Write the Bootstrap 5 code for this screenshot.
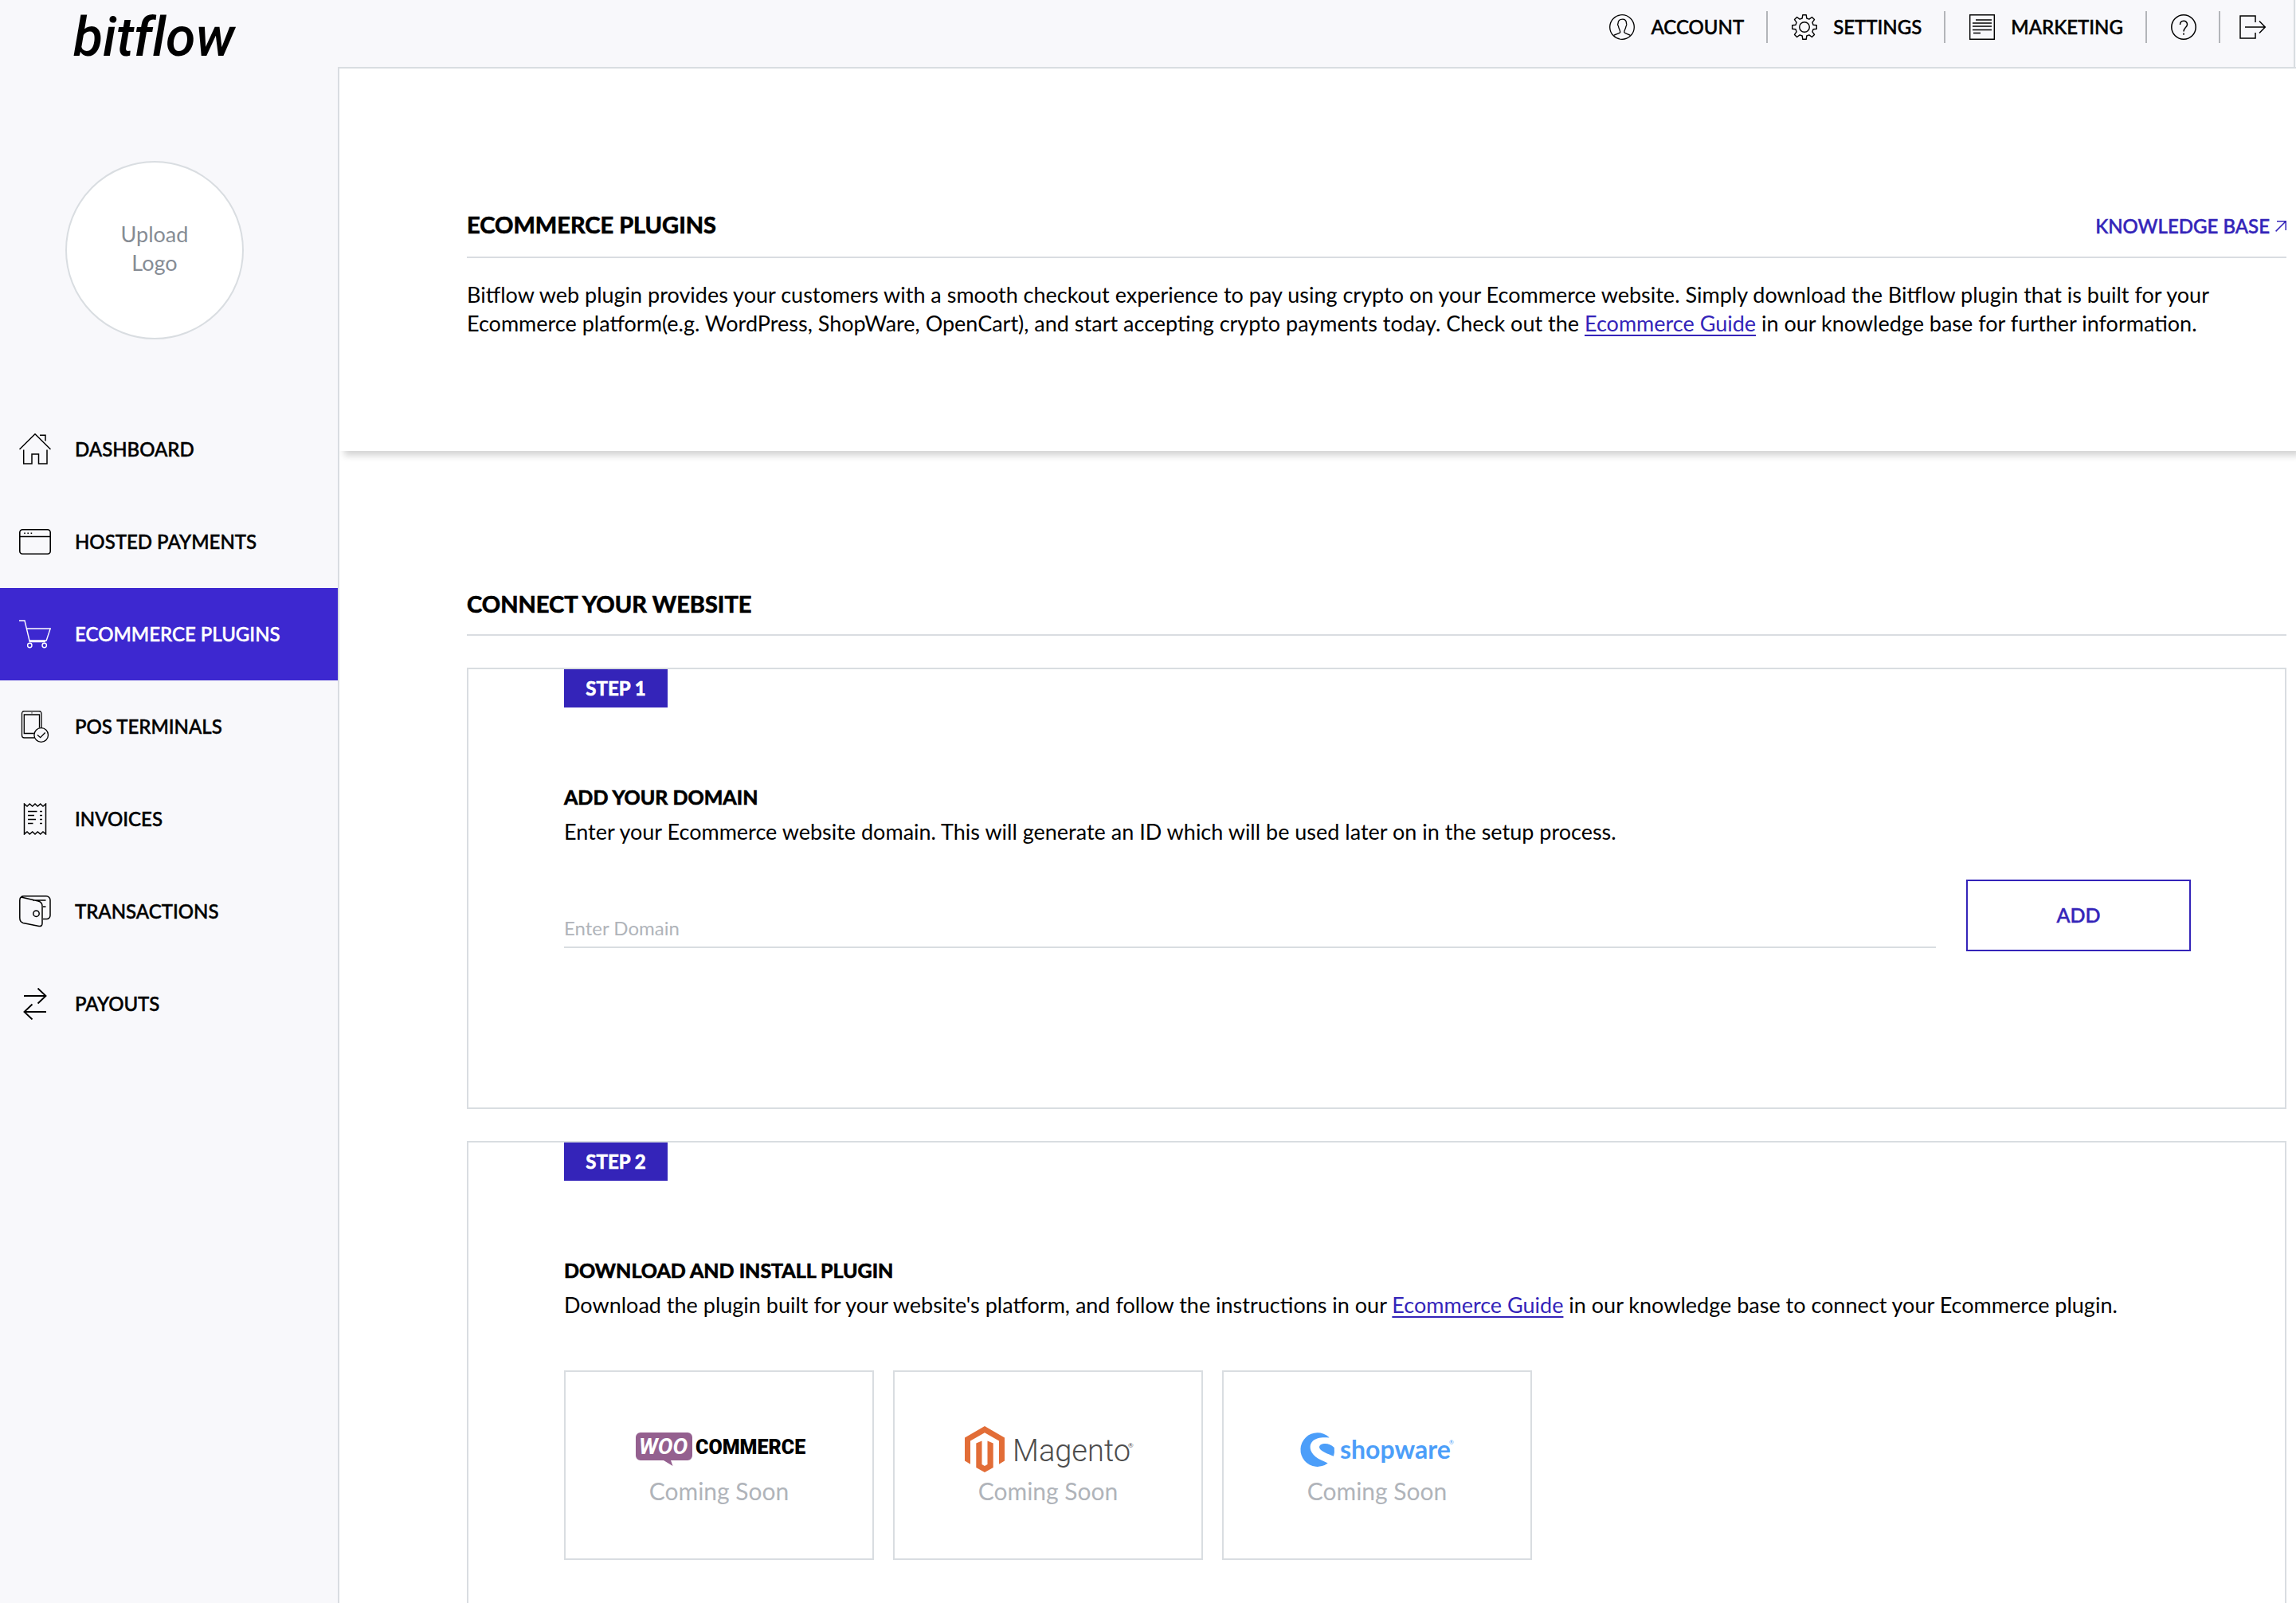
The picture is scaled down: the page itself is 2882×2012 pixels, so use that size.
<!DOCTYPE html>
<html lang="en">
<head>
<meta charset="utf-8">
<meta name="viewport" content="width=device-width, initial-scale=1">
<title>Bitflow – Ecommerce Plugins</title>
<link href="https://cdn.jsdelivr.net/npm/bootstrap@5.3.0/dist/css/bootstrap.min.css" rel="stylesheet">
<style>
  :root { --line: #d9dde1; --brand: #3424b9; --brand-active: #3d28d0; --shell: #f8f8fb; --mute: #b0b4ba; }
  body { font-family: Lato, "Open Sans", sans-serif; font-size: 27px; line-height: 36px; color: #000; background: var(--shell); }
  svg { display: block; flex: none; fill: none; stroke: currentColor; }
  a { color: inherit; }
  .topbar { height: 84px; border-right: 2px solid var(--line); margin-right: 1px; padding: 14px 34px 0 92px; }
  .wordmark { font-family: Roboto, Inter, sans-serif; font-size: 68px; font-weight: 500; font-style: italic; line-height: 66px; color: #000; font-variant-ligatures: none; }
  .topnav a { gap: 20px; }
  .topnav a, .side .nav-link, .kb { font-size: 24px; font-weight: 500; -webkit-text-stroke: .5px currentColor; }
  .topnav li { display: flex; align-items: center; height: 40px; padding: 0 28px 0 30px; border-left: 2px solid #b3b5b9; }
  .topnav li:first-child { border-left: 0; }
  .topnav li:last-child { padding: 0 0 0 24px; }
  .side { width: 424px; flex: none; padding-top: 118px; }
  .upload { width: 224px; height: 224px; margin: 0 0 80px 82px; border: 2px solid var(--line); background: #fff; color: #868c94; line-height: 36px; }
  .side .nav-link { height: 116px; padding: 0 24px; gap: 30px; color: #000; border-radius: 0; }
  .side .nav-link.active { background: var(--brand-active); color: #fff; }
  .board { border-left: 2px solid var(--line); border-top: 2px solid var(--line); min-width: 0; }
  .intro { padding: 178px 12px 142px 160px; box-shadow: 6px 6px 8px rgba(0,0,0,.17); }
  .intro p { margin: 28px 0 0; }
  .connect { padding: 174px 12px 0 160px; }
  .titlebar { border-bottom: 2px solid var(--line); padding-bottom: 18px; }
  .titlebar h1, .titlebar h2 { font-size: 29px; line-height: 36px; margin: 0 0 2px; }
  .titlebar h1, .titlebar h2, .step h3, .tag { font-weight: 700; -webkit-text-stroke: .7px currentColor; }
  .kb { line-height: 40px; color: var(--brand); gap: 7px; }
  .guide { color: var(--brand); text-decoration: underline; text-decoration-thickness: 2px; text-underline-offset: 4px; }
  .step { border: 2px solid var(--line); margin-top: 40px; padding: 0 118px 196px 120px; }
  .tag { display: flex; align-items: center; justify-content: center; width: 130px; height: 48px; margin-bottom: 94px; background: var(--brand); color: #fff; font-size: 24px; }
  .step h3 { font-size: 25px; line-height: 36px; margin: 0 0 8px; }
  .addrow { gap: 38px; margin-top: 42px; }
  .domain { height: 50px; padding: 0; margin-bottom: 4px; border: 0; border-bottom: 2px solid var(--line); border-radius: 0; font-size: 24px; background: #fff; }
  .domain::placeholder { color: var(--mute); opacity: 1; }
  .addbtn { width: 282px; height: 90px; border: 2px solid var(--brand); border-radius: 0; color: var(--brand); font-size: 25px; font-weight: 500; -webkit-text-stroke: .5px currentColor; }
  .plugins { gap: 24px; margin-top: 64px; }
  .plugin { width: 389px; height: 238px; border: 2px solid var(--line); color: var(--mute); font-size: 30px; padding-top: 64px; }
  .plugin svg { overflow: visible; stroke: none; }
  .plugin .logotype { font-family: Roboto, "Liberation Sans", sans-serif; }
</style>
</head>
<body>
<div class="vh-100 overflow-hidden d-flex flex-column">
  <header class="topbar d-flex align-items-start justify-content-between flex-shrink-0">
    <a href="#" class="wordmark text-decoration-none">bitflow</a>
    <ul class="topnav list-unstyled d-flex align-items-center m-0">
      <li><a href="#" class="d-flex align-items-center text-decoration-none">
        <svg width="32" height="32" viewBox="0 0 32 32" stroke-width="1.3"><circle cx="16" cy="16" r="15.3"/><path d="M5.500 26.500C8 24.500 13 24.500 13.700 22.500 13.900 20 12 18.500 11.500 15 11 14.500 10.200 12.500 11 11.500 11 8 13 6.200 16.500 6.200S21.500 8 21.500 11.500C22 12.500 21.500 14.500 21 15 20.500 18.500 18.600 20 18.800 22.500 19.500 24.500 24 24.500 26.500 26.500"/></svg>ACCOUNT</a></li>
      <li><a href="#" class="d-flex align-items-center text-decoration-none">
        <svg width="32" height="32" viewBox="-16 -16 32 32" stroke-width="1.4" stroke-linejoin="round"><path d="M-2.800-11-2.200-15.300H2.200L2.800-11 5.900-9.900 9.400-12.500 12.500-9.400 9.900-5.900 11-2.800 15.300-2.200V2.200L11 2.800 9.900 5.900 12.500 9.400 9.400 12.500 5.900 9.900 2.800 11 2.200 15.300H-2.200L-2.800 11-5.900 9.900-9.400 12.500-12.500 9.400-9.900 5.900-11 2.800-15.300 2.200V-2.200L-11-2.800-9.900-5.900-12.500-9.400-9.400-12.500-5.900-9.900Z"/><circle r="6.300"/></svg>SETTINGS</a></li>
      <li><a href="#" class="d-flex align-items-center text-decoration-none">
        <svg width="32" height="32" viewBox="0 0 32 32" stroke-width="1.4"><path d="M.7.7H31.300V31.300H.7ZM8 7H28M4 11H28M4 15H28M4 19.500H28M5 23.500H14"/></svg>MARKETING</a></li>
      <li><a href="#" aria-label="Help">
        <svg width="32" height="32" viewBox="0 0 32 32" stroke-width="1.5"><circle cx="16" cy="16" r="15.200"/><path d="M11.500 13C11.500 6.800 20.500 6.800 20.500 12.500 20.500 16.500 16 16.500 16 21.500M16 23.500V25.800"/></svg></a></li>
      <li><a href="#" aria-label="Log out">
        <svg width="34" height="32" viewBox="0 0 34 32" stroke-width="1.500"><path d="M20 10V2H1V30H20V23M7 16H32M25 8.500 32.300 16 25 23.500"/></svg></a></li>
    </ul>
  </header>

  <div class="d-flex flex-grow-1">
    <aside class="side">
      <button type="button" class="upload rounded-circle d-flex align-items-center justify-content-center p-0 pb-1">Upload<br>Logo</button>
      <nav class="nav flex-column">
        <a href="#" class="nav-link d-flex align-items-center"><svg width="40" height="40" viewBox="0 0 40 40" stroke-width="1.500"><path d="M.5 20 20 .8 39.500 20M26 2.200H33V9.500M5.700 20.500V38H16V26H24.500V38H35V20.500"/></svg>DASHBOARD</a>
        <a href="#" class="nav-link d-flex align-items-center"><svg width="40" height="40" viewBox="0 0 40 40" stroke-width="1.600"><rect x=".8" y="4.800" width="38.400" height="30.400" rx="3.500"/><path d="M1 13.500H39M6.200 9.300h1.600M10.400 9.300h1.600M14.600 9.300h1.600"/></svg>HOSTED PAYMENTS</a>
        <a href="#" class="nav-link active d-flex align-items-center" aria-current="page"><svg width="40" height="40" viewBox="0 0 40 40" stroke-width="1.400"><path d="M0 3H7L13.300 29.500H33M8.700 13H39.200L34.200 28H13"/><circle cx="13.300" cy="34" r="2.700"/><circle cx="31.700" cy="34" r="2.700"/></svg>ECOMMERCE PLUGINS</a>
        <a href="#" class="nav-link d-flex align-items-center"><svg width="40" height="40" viewBox="0 0 40 40" stroke-width="1.300"><path d="M19.500 34H6.500a3 3 0 0 1-3-3V3.500a3 3 0 0 1 3-3H25a3 3 0 0 1 3 3V21.500M18.700 28.500H6.300V5H25.500V21.500M15.500 2.800h1"/><circle cx="27.700" cy="30.500" r="8.800"/><path d="M23 30.500 26.700 33.700 32.700 27.500"/></svg>POS TERMINALS</a>
        <a href="#" class="nav-link d-flex align-items-center"><svg width="40" height="40" viewBox="0 0 40 40" stroke-width="1.500"><path d="M6.500 39V1L10 4 13.300 1 16.700 4 20 1 23.300 4 26.700 1 30 4 33.500 1V39L30 36 26.700 39 23.300 36 20 39 16.700 36 13.300 39 10 36ZM11 10.500H22.500M11 15.500H19M11 20.500H21M11 25.500H17.500M26 10.500h3M26 15.500h3M26 20.500h3M26 25.500h3"/></svg>INVOICES</a>
        <a href="#" class="nav-link d-flex align-items-center"><svg width="40" height="40" viewBox="0 0 40 40" stroke-width="1.500"><path d="M2.500 2Q3.500.8 6 .8H34a5 5 0 0 1 5 5V25a4.500 4.500 0 0 1-4.500 4.500H30M17 6H33.500M30 14H33.500M2.500 2 24 7Q29 8.500 29 13V35Q29 39 25 38.500L5 34.500Q.8 33 .8 28V6Q.8 3 2.500 2Z"/><circle cx="21.500" cy="22.700" r="3.700"/></svg>TRANSACTIONS</a>
        <a href="#" class="nav-link d-flex align-items-center"><svg width="40" height="40" viewBox="0 0 40 40" stroke-width="1.900"><path d="M6 10H33.500M23.500.5 33.500 10 23.500 19.500M34 30H7M16.500 20.500 6.500 30 16.500 39.500"/></svg>PAYOUTS</a>
      </nav>
    </aside>

    <main class="board flex-grow-1 bg-white overflow-hidden">
      <section class="intro">
        <div class="titlebar d-flex align-items-start justify-content-between">
          <h1>ECOMMERCE PLUGINS</h1>
          <a href="#" class="kb d-flex align-items-center text-decoration-none">KNOWLEDGE BASE<svg width="14" height="14" viewBox="0 0 14 14" stroke-width="1.500"><path d="M2 .8H13.200V12M13.200.8.6 13.400"/></svg></a>
        </div>
        <p>Bitflow web plugin provides your customers with a smooth checkout experience to pay using crypto on your Ecommerce website. Simply download the Bitflow plugin that is built for your Ecommerce platform(e.g. WordPress, ShopWare, OpenCart), and start accepting crypto payments today. Check out the <a href="#" class="guide">Ecommerce Guide</a> in our knowledge base for further information.</p>
      </section>

      <section class="connect">
        <div class="titlebar"><h2>CONNECT YOUR WEBSITE</h2></div>

        <div class="step">
          <span class="tag">STEP 1</span>
          <h3><label for="domain">ADD YOUR DOMAIN</label></h3>
          <p class="mb-0">Enter your Ecommerce website domain. This will generate an ID which will be used later on in the setup process.</p>
          <form class="addrow d-flex align-items-end">
            <input id="domain" type="text" class="domain form-control" placeholder="Enter Domain">
            <button type="button" class="addbtn btn flex-shrink-0">ADD</button>
          </form>
        </div>

        <div class="step">
          <span class="tag">STEP 2</span>
          <h3>DOWNLOAD AND INSTALL PLUGIN</h3>
          <p class="mb-0">Download the plugin built for your website's platform, and follow the instructions in our <a href="#" class="guide">Ecommerce Guide</a> in our knowledge base to connect your Ecommerce plugin.</p>
          <div class="plugins d-flex">
            <div class="plugin d-flex flex-column align-items-center">
              <svg width="210" height="67" viewBox="0 0 210 67" role="img" aria-label="WooCommerce">
                <path fill="#94608f" d="M6 12H65a6 6 0 0 1 6 6V41a6 6 0 0 1-6 6H44L46.500 54 35 47H6a6 6 0 0 1-6-6V18a6 6 0 0 1 6-6Z"/>
                <text class="logotype" x="4" y="39" font-size="28" font-weight="700" font-style="italic" fill="#fff">WOO</text>
                <text class="logotype" x="75" y="39" font-size="25" font-weight="900" fill="#000">COMMERCE</text>
              </svg>
              <span>Coming Soon</span>
            </div>
            <div class="plugin d-flex flex-column align-items-center">
              <svg width="210" height="67" viewBox="0 0 210 67" role="img" aria-label="Magento">
                <path fill="#e26d37" d="M25 4 50 18.500V47.500L43 51.700V22.600L25 12.300 7 22.600V51.700L0 47.500V18.500ZM14.300 25.500 21.500 22.500V52L25 54 28.500 52V22.500L35.700 25.500V56L25 62 14.300 56Z"/>
                <text class="logotype" x="60" y="48" font-size="38" font-weight="300" fill="#4d4d4d">Magento</text>
                <text x="205" y="31" font-size="8" fill="#4d4d4d">®</text>
              </svg>
              <span>Coming Soon</span>
            </div>
            <div class="plugin d-flex flex-column align-items-center">
              <svg width="190" height="67" viewBox="0 0 190 67" role="img" aria-label="Shopware">
                <g fill="#4c9ef9"><path d="M34.300 18A21.300 21.300 0 1 0 32.700 50.500C27 47.500 22 46 17.700 42.700 9 36 9 27 14 22.500 18 18.500 26 17.500 34.300 18.500ZM40.800 31C37 27 32 25.500 28 26 23.500 26.500 21 29 22.500 32 24.500 36 33 39 40 41.700Q41.500 37 40.800 31Z"/>
                <text x="48" y="45" font-size="32" font-weight="700">shopware</text>
                <text x="185" y="27" font-size="7">®</text></g>
              </svg>
              <span>Coming Soon</span>
            </div>
          </div>
        </div>
      </section>
    </main>
  </div>
</div>
<script src="https://cdn.jsdelivr.net/npm/bootstrap@5.3.0/dist/js/bootstrap.bundle.min.js"></script>
</body>
</html>
